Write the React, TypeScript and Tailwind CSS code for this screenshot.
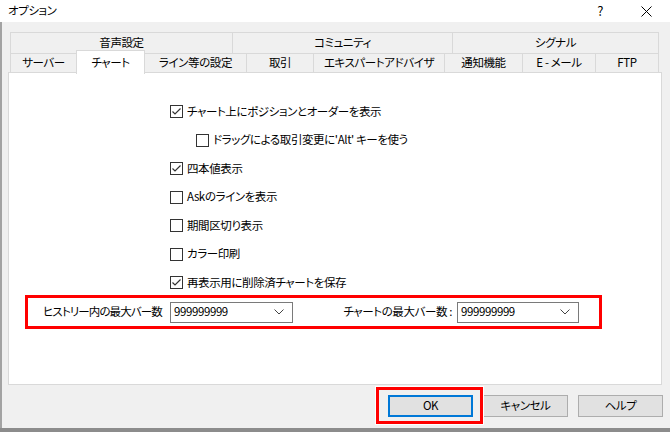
import React from "react";

const jp = "font-['Segoe_UI','Noto_Sans_CJK_JP',sans-serif] [font-feature-settings:'palt']";
const txt = "text-[11.5px] tracking-[-0.4px]";

const topTabs = [
  { label: "音声設定", w: "w-[221px]" },
  { label: "コミュニティ", w: "w-[220px]" },
  { label: "シグナル", w: "flex-1" },
];

const bottomTabs = [
  { label: "サーバー", w: "w-[66px]" },
  { label: "チャート", w: "w-[69px]", active: true },
  { label: "ライン等の設定", w: "w-[101px]" },
  { label: "取引", w: "w-[67px]" },
  { label: "エキスパートアドバイザ", w: "w-[131px]" },
  { label: "通知機能", w: "w-[78px]" },
  { label: "E - メール", w: "w-[73px]" },
  { label: "FTP", w: "flex-1" },
];

const options = [
  { label: "チャート上にポジションとオーダーを表示", checked: true },
  { label: "ドラッグによる取引変更に'Alt' キーを使う", checked: false, indent: true },
  { label: "四本値表示", checked: true },
  { label: "Askのラインを表示", checked: false },
  { label: "期間区切り表示", checked: false },
  { label: "カラー印刷", checked: false },
  { label: "再表示用に削除済チャートを保存", checked: true },
];

function Checkbox({ checked }: { checked: boolean }) {
  return (
    <svg width="13" height="13" viewBox="0 0 13 13" className="shrink-0">
      <rect x="0.5" y="0.5" width="12" height="12" fill="#fff" stroke="#333" />
      {checked && (
        <polyline points="2.5,6.5 5,9 10.5,3.5" fill="none" stroke="#333" strokeWidth="1.2" />
      )}
    </svg>
  );
}

function Select({ value, width }: { value: string; width: string }) {
  return (
    <div
      className={`${width} h-[21px] flex items-center justify-between border border-[#7a7a7a] bg-white pl-[3px] pr-[8px] text-black`}
    >
      <span>{value}</span>
      <svg width="10" height="6" viewBox="0 0 10 6">
        <polyline points="0.5,0.5 5,5 9.5,0.5" fill="none" stroke="#444" strokeWidth="1" />
      </svg>
    </div>
  );
}

export default function App() {
  return (
    <div className={`w-[670px] h-[432px] overflow-hidden flex flex-col bg-[#f0f0f0] text-black ${jp} ${txt}`}>
      {/* Title bar */}
      <div className="h-[22px] shrink-0 bg-white flex items-center pl-[8px]">
        <span>オプション</span>
        <span className="ml-auto mr-[38px] text-[13px]">?</span>
        <svg width="11" height="11" viewBox="0 0 11 11" className="mr-[18px]">
          <path d="M0.5 0.5 L10.5 10.5 M10.5 0.5 L0.5 10.5" stroke="#000" strokeWidth="1" />
        </svg>
      </div>

      <div className="flex-1 flex flex-col border-l-2 border-[#a3a3a3] pl-[6px] pr-[8px] pt-[10px]">
        {/* Tabs */}
        <div className="px-[2px] pr-[3px]">
          <div className="flex h-[21px] border border-[#d9d9d9] border-b-0">
            {topTabs.map((t, i) => (
              <div
                key={t.label}
                className={`${t.w} flex items-center justify-center ${i > 0 ? "border-l border-[#d9d9d9]" : ""}`}
              >
                {t.label}
              </div>
            ))}
          </div>
          <div className="flex h-[19px] border-t border-[#d9d9d9]">
            {bottomTabs.map((t, i) =>
              t.active ? (
                <div
                  key={t.label}
                  className={`${t.w} relative z-10 -mt-[4px] h-[24px] bg-white border border-[#d9d9d9] border-b-0 flex items-start justify-center pt-[3px]`}
                >
                  {t.label}
                </div>
              ) : (
                <div
                  key={t.label}
                  className={`${t.w} flex items-center justify-center border-[#d9d9d9] ${i === 0 ? "border-l" : ""} ${
                    i === bottomTabs.length - 1 ? "border-r" : ""
                  } ${bottomTabs[i - 1]?.active ? "" : i > 0 ? "border-l" : ""}`}
                >
                  {t.label}
                </div>
              )
            )}
          </div>
        </div>

        {/* Panel */}
        <div className="h-[313px] shrink-0 bg-white border border-[#d9d9d9]">
          <div className="pt-[32px] pl-[161px] flex flex-col gap-[15.5px]">
            {options.map((o) => (
              <div key={o.label} className={`h-[13px] flex items-center gap-[4px] ${o.indent ? "ml-[26px]" : ""}`}>
                <Checkbox checked={o.checked} />
                <span className="leading-none whitespace-nowrap">{o.label}</span>
              </div>
            ))}
          </div>

          <div className="mt-[6px] ml-[16px] w-[577px] h-[34px] border-[3px] border-[#ff0000] flex items-center pl-[15px] pr-[20px]">
            <span className="w-[127px] whitespace-nowrap tracking-[-0.9px]">ヒストリー内の最大バー数</span>
            <Select value="999999999" width="w-[123px]" />
            <span className="ml-auto mr-[5px] whitespace-nowrap">チャートの最大バー数 :</span>
            <Select value="999999999" width="w-[122px]" />
          </div>
        </div>

        {/* Buttons */}
        <div className="mt-[10px] flex justify-end gap-[10px] mr-[-1px]">
          <div className="relative">
            <div className="absolute -left-[12px] -top-[8px] -right-[10px] -bottom-[7px] border-[3px] border-[#ff0000] outline outline-1 outline-white" />
            <button className="relative w-[85px] h-[22px] bg-[#e1e1e1] border-2 border-[#0078d7]">OK</button>
          </div>
          <button className="w-[85px] h-[22px] bg-[#e1e1e1] border border-[#adadad]">キャンセル</button>
          <button className="w-[85px] h-[22px] bg-[#e1e1e1] border border-[#adadad]">ヘルプ</button>
        </div>
      </div>

      <div className="h-[4px] shrink-0 bg-[#8c8c8c]" />
    </div>
  );
}
